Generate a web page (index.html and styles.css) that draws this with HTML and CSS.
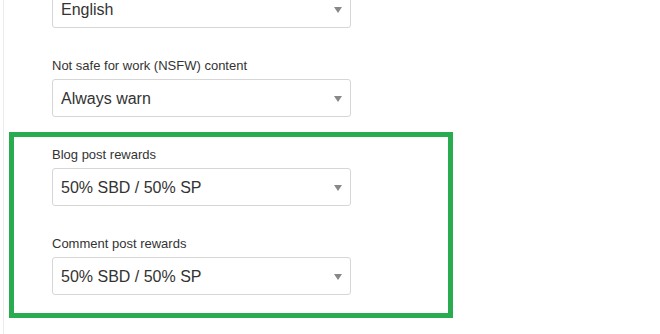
FILE: index.html
```html
<!DOCTYPE html>
<html lang="en">
<head>
    <meta charset="UTF-8">
    <meta name="viewport" content="width=device-width, initial-scale=1.0">
    <title>Settings</title>
    <link rel="stylesheet" href="styles.css">
</head>
<body>
    <div class="settings">
        <div class="field">
            <div class="select-wrap">
                <select id="language" class="custom-select">
                    <option>English</option>
                </select>
            </div>
        </div>

        <div class="field">
            <label for="nsfw">Not safe for work (NSFW) content</label>
            <div class="select-wrap">
                <select id="nsfw" class="custom-select">
                    <option>Always warn</option>
                </select>
            </div>
        </div>

        <!-- выделенный блок -->
        <div class="highlight">
            <div class="field">
                <label for="blogRewards">Blog post rewards</label>
                <div class="select-wrap">
                    <select id="blogRewards" class="custom-select">
                        <option>50% SBD / 50% SP</option>
                    </select>
                </div>
            </div>
            <div class="field">
                <label for="commentRewards">Comment post rewards</label>
                <div class="select-wrap">
                    <select id="commentRewards" class="custom-select">
                        <option>50% SBD / 50% SP</option>
                    </select>
                </div>
            </div>
        </div>
    </div>
</body>
</html>
```

FILE: styles.css
```css
/* Общие стили */
html, body {
    height: 100%;
    overflow: hidden;
}

body {
    margin: 0;
    background-color: #fff;
    color: #333;
    font-family: "Liberation Sans", Arial, sans-serif;
}

.settings {
    margin: -10px 0 0 3px;
    padding-left: 48px;
    border-left: 1px solid #ebebeb;
    height: calc(100% + 10px);
    box-sizing: border-box;
}

.field {
    margin-bottom: 29px;
}

.field label {
    display: block;
    height: 18px;
    line-height: 18px;
    font-size: 13px;
    color: #333;
    margin-bottom: 4px;
}

/* Стили для селектов */
.select-wrap {
    position: relative;
    width: 299px;
}

.select-wrap:after {
    content: '';
    position: absolute;
    right: 9px;
    top: 50%;
    margin-top: -2px;
    border-left: 4px solid transparent;
    border-right: 4px solid transparent;
    border-top: 6px solid #888;
    pointer-events: none;
}

.custom-select {
    -webkit-appearance: none;
    appearance: none;
    display: block;
    width: 100%;
    height: 38px;
    padding: 0 8px;
    border: 1px solid #d6d6d6;
    border-radius: 3px;
    background-color: #fff;
    font-family: "Liberation Sans", Arial, sans-serif;
    font-size: 16px;
    color: #333;
    outline: none;
}

/* Зелёная рамка */
.highlight {
    width: 444px;
    margin: -14px 0 0 -43px;
    padding: 9px 0 18px 38px;
    border: 5px solid #29ab4f;
    box-sizing: border-box;
}

.highlight .field:last-child {
    margin-bottom: 0;
}
```
